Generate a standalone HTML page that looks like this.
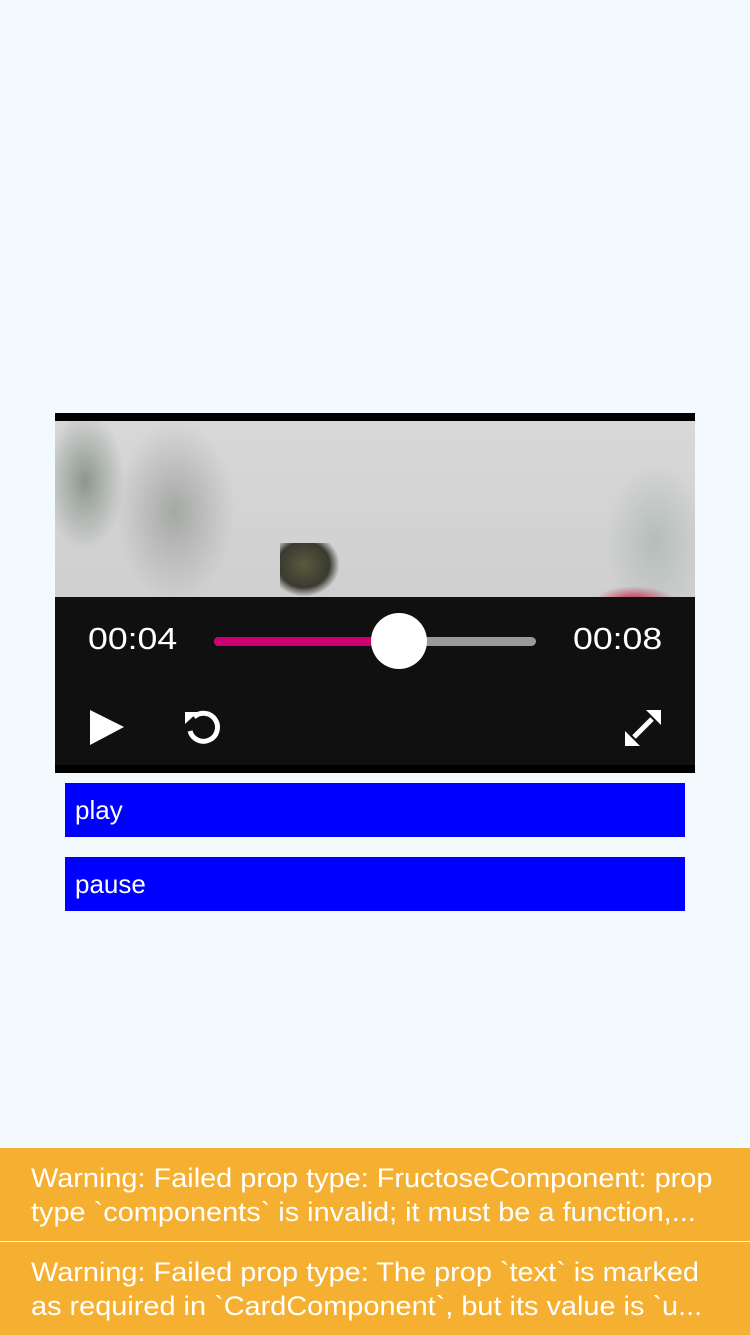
<!DOCTYPE html>
<html><head><style>
body{margin:0;width:750px;height:1334px;background:#f3fafe;position:relative;overflow:hidden;font-family:"Liberation Sans",sans-serif}
.v{position:absolute;left:55px;top:413px;width:640px;height:360px;background:#000}
.img{position:absolute;left:0;top:8px;width:640px;height:176px;background:
radial-gradient(ellipse 40px 70px at 30px 60px,rgba(90,110,95,.6),transparent),
radial-gradient(ellipse 60px 90px at 120px 90px,rgba(120,125,120,.5),transparent),
radial-gradient(ellipse 50px 80px at 600px 120px,rgba(150,170,160,.5),transparent),
radial-gradient(ellipse 40px 15px at 580px 180px,#c8183c,transparent),
linear-gradient(#d8d8d8,#cfcfcf);}
.bird{position:absolute;left:225px;top:122px;width:60px;height:54px;background:radial-gradient(ellipse at 40% 40%,#5a5a40,#3a3a30 50%,transparent 70%)}
.bar{position:absolute;left:0;top:184px;width:640px;height:168px;background:#101010}
.t{position:absolute;color:#fff;font-size:31px;top:24px;transform:scaleX(1.15);transform-origin:left}
.tr{position:absolute;top:40px;height:9px;border-radius:5px}
.btn{position:absolute;left:65px;width:620px;height:54px;background:#0000ff;color:#fff;font-size:26px;line-height:54px;text-indent:10px}
.w{position:absolute;left:0;width:750px;background:#f5b031;color:#fff;font-size:27px;line-height:34px;height:93px}
.w div{position:absolute;left:31px;top:13px;white-space:nowrap;transform:scaleX(1.07);transform-origin:left}
</style></head><body>
<div class="v">
<div class="img"><div class="bird"></div></div>
<div class="bar">
<div class="t" style="left:33px">00:04</div>
<div class="t" style="left:518px">00:08</div>
<div class="tr" style="left:159px;width:322px;background:#9a9a9a"></div>
<div class="tr" style="left:159px;width:190px;background:#cc0070"></div>
<div style="position:absolute;left:316px;top:16px;width:56px;height:56px;border-radius:50%;background:#fff"></div>
<svg style="position:absolute;left:33px;top:110px" width="40" height="40" viewBox="0 0 40 40"><path d="M2 3 L36 20 L2 38Z" fill="#fff"/></svg>
<svg style="position:absolute;left:126px;top:110px" width="44" height="44" viewBox="0 0 44 44"><path d="M9 24 A14 14 0 1 0 13 10" fill="none" stroke="#fff" stroke-width="5"/><path d="M4 5 L17 5 L4 17Z" fill="#fff"/></svg>
<svg style="position:absolute;left:567px;top:110px" width="42" height="42" viewBox="0 0 42 42"><path d="M12 30 L30 12" stroke="#fff" stroke-width="5"/><path d="M24 3 L39 3 L39 18Z M3 24 L3 39 L18 39Z" fill="#fff"/></svg>
</div>
</div>
<div class="btn" style="top:783px">play</div>
<div class="btn" style="top:857px">pause</div>
<div class="w" style="top:1148px"><div>Warning: Failed prop type: FructoseComponent: prop<br>type `components` is invalid; it must be a function,...</div></div>
<div class="w" style="top:1242px"><div>Warning: Failed prop type: The prop `text` is marked<br>as required in `CardComponent`, but its value is `u...</div></div>
</body></html>
